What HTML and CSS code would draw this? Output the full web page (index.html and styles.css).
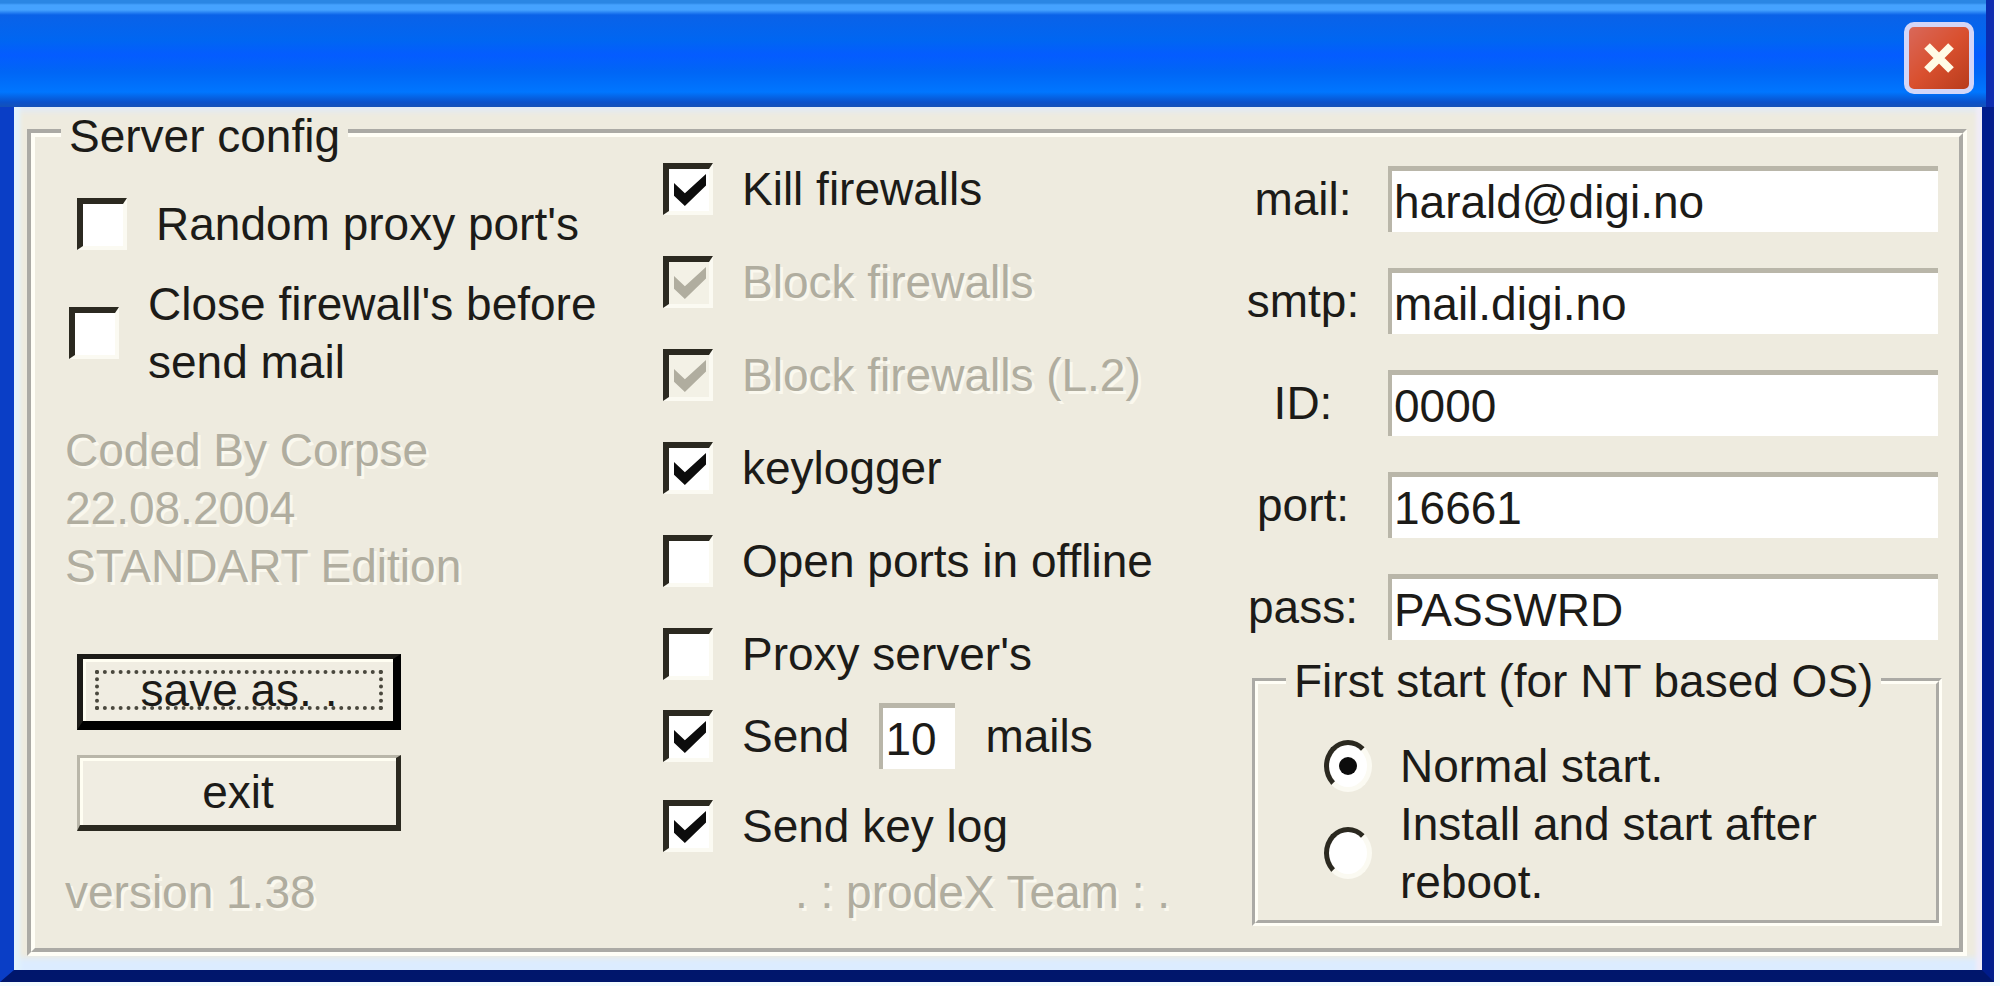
FILE: index.html
```
<!DOCTYPE html>
<html lang="en">
<head>
  <meta charset="UTF-8" />
  <title>Server config</title>
  <meta name="viewport" content="width=device-width, initial-scale=1.0" />
  <link rel="stylesheet" href="styles.css">
</head>
<body>
  <div class="window">
    <header class="titlebar">
      <button type="button" class="close" aria-label="Close">
        <svg viewBox="0 0 32 30" width="32" height="30"><path d="M4 3 L28 27 M28 3 L4 27" stroke="#fffbe6" stroke-width="8" fill="none" /></svg>
      </button>
    </header>
    <form class="client" onsubmit="return false;">
      <fieldset class="config">
        <legend>Server config</legend>
        <div class="columns">
          <section class="left">
            <label class="option random"><input type="checkbox"> Random proxy port's</label>
            <label class="option"><input type="checkbox"> <span>Close firewall's before<br>send mail</span></label>
            <p class="info">Coded By Corpse<br>22.08.2004<br>STANDART Edition</p>
            <button type="submit" class="btn default"><span>save as. .</span></button>
            <button type="button" class="btn">exit</button>
            <p class="info version">version 1.38</p>
          </section>

          <section class="middle">
            <div class="options">
              <label class="option"><input type="checkbox" checked> Kill firewalls</label>
              <label class="option disabled"><input type="checkbox" checked disabled> Block firewalls</label>
              <label class="option disabled"><input type="checkbox" checked disabled> Block firewalls (L.2)</label>
              <label class="option"><input type="checkbox" checked> keylogger</label>
              <label class="option"><input type="checkbox"> Open ports in offline</label>
              <label class="option"><input type="checkbox"> Proxy server's</label>
            </div>
            <div class="send">
              <label class="option"><input type="checkbox" checked> Send</label>
              <input type="text" id="count" value="10">
              <label for="count">mails</label>
            </div>
            <label class="option"><input type="checkbox" checked> Send key log</label>
            <p class="info team">. : prodeX Team : .</p>
          </section>

          <section class="right">
            <div class="fields">
              <label for="mail">mail:</label>
              <input type="text" id="mail" value="harald@digi.no">
              <label for="smtp">smtp:</label>
              <input type="text" id="smtp" value="mail.digi.no">
              <label for="ident">ID:</label>
              <input type="text" id="ident" value="0000">
              <label for="port">port:</label>
              <input type="text" id="port" value="16661">
              <label for="pass">pass:</label>
              <input type="text" id="pass" value="PASSWRD">
            </div>
            <fieldset class="start">
              <legend>First start (for NT based OS)</legend>
              <label class="option"><input type="radio" name="start" checked> Normal start.</label>
              <label class="option"><input type="radio" name="start"> <span>Install and start after<br>reboot.</span></label>
            </fieldset>
          </section>
        </div>
      </fieldset>
    </form>
  </div>
</body>
</html>
```

FILE: styles.css
```
* { box-sizing: border-box; }
body { margin: 0; background: #f4fcff; color: #1c1b18; font: 46px/58px "Liberation Sans", Arial, sans-serif; }
p { margin: 0; }
input, button { font: inherit; color: inherit; margin: 0; border-radius: 0; }

.window { display: flex; flex-direction: column; min-height: 100vh; padding: 0 6px 4px 0; }
.titlebar { display: flex; justify-content: flex-end; align-items: center; height: 107px; padding: 8px 12px 0 0; border-right: 8px solid #0a2cb0; background: linear-gradient(#2a86e4 0, #2a86e4 3px, #45a2ff 5px, #45a2ff 10px, #0a62e8 15px, #0066f2 40px, #045cff 55px, #0066f6 72px, #0076ff 92px, #0a52cc 102px, #1450b8 107px); }
.close { display: flex; justify-content: center; align-items: center; width: 70px; height: 72px; padding: 0; border: 5px solid #d3d6f8; border-radius: 10px; background: linear-gradient(135deg, #d9685a, #d9502f 50%, #b83c1c); }

.client { flex: 1; display: flex; padding: 3px 15px 14px 13px; border: solid; border-width: 0 12px 12px 14px; border-color: #00166c #001c8c #00166c #0a3ec6; background: #eeebdf; box-shadow: inset 10px 0 4px -4px #e2f2fc, inset -10px 0 4px -4px #f0ecf8, inset 0 -14px 6px -2px #dcecff, inset 0 8px 6px -4px #dfeafa; }
fieldset { min-width: 0; margin: 0; border: 8px groove #fffef6; }
legend { line-height: 46px; }
.config { flex: 1; padding: 0 21px 0 0; }
.config > legend { margin-left: 26px; padding: 6px 8px 0; line-height: 40px; }
.columns { display: grid; grid-template-columns: 628fr 577fr 698fr; }

.option { display: flex; align-items: center; gap: 29px; }
.disabled, .info { color: #b0ad9f; text-shadow: 3px 3px 0 #faf8ee; }

input[type=checkbox], input[type=radio] { appearance: none; flex: none; display: grid; width: 50px; height: 52px; border: 6px solid; border-color: #2b2920 #fbfaf2 #fbfaf2 #2b2920; border-width: 6px 4px 4px 6px; background: #fff; }
input[type=checkbox]:checked::after { content: ""; width: 32px; height: 32px; margin: 5px 0 0 5px; background: #0c0c0c; clip-path: polygon(0 28%, 34% 60%, 100% 0, 100% 36%, 34% 100%, 0 68%); }
input[type=checkbox]:disabled { background: #f3f1e6; }
input[type=checkbox]:disabled::after { background: #b0ad9f; }
input[type=radio] { width: 48px; border-width: 5px; border-radius: 50%; }
input[type=radio]:checked::after { content: ""; place-self: center; width: 18px; height: 18px; border-radius: 50%; background: #0c0c0c; }
input[type=text] { min-width: 0; height: 66px; padding: 0 2px; border: solid #b9b6a9; border-width: 5px 0 0 4px; background: #fff; }

.left { display: flex; flex-direction: column; align-items: flex-start; padding: 39px 0 0 30px; }
.left .option { margin-left: 4px; }
.left .random { margin: 0 0 22px 12px; }
.left .info { margin-top: 30px; }
.btn { width: 324px; height: 76px; margin: 25px 0 0 12px; padding: 0; border: solid; border-width: 3px 5px 6px 3px; border-color: #b9b6a9 #2b2920 #2b2920 #b9b6a9; background: #f0ede2; box-shadow: inset 3px 3px 0 #fffef2; }
.default { margin-top: 59px; border-width: 5px 8px 9px 6px; border-color: #1c1b18 #000 #000 #1c1b18; }
.default span { display: block; margin: 0 10px 0 12px; border: 4px dotted #4a483e; line-height: 32px; }
.left .version { margin-top: 32px; }

.middle { padding-top: 4px; }
.options { display: grid; gap: 35px; }
.send { display: flex; align-items: center; gap: 30px; margin: 20px 0 28px; }
.send input[type=text] { width: 76px; }
.team { margin: 8px 0 0 132px; }

.right { padding-top: 10px; }
.fields { display: grid; grid-template-columns: 126px 1fr; gap: 36px 22px; align-items: center; }
.fields label { text-align: center; }
.start { margin: 18px -4px 0 12px; padding: 33px 0 9px 66px; border-width: 6px; }
.start legend { margin-left: -38px; padding: 0 8px; }
.start .option { gap: 28px; }
```
